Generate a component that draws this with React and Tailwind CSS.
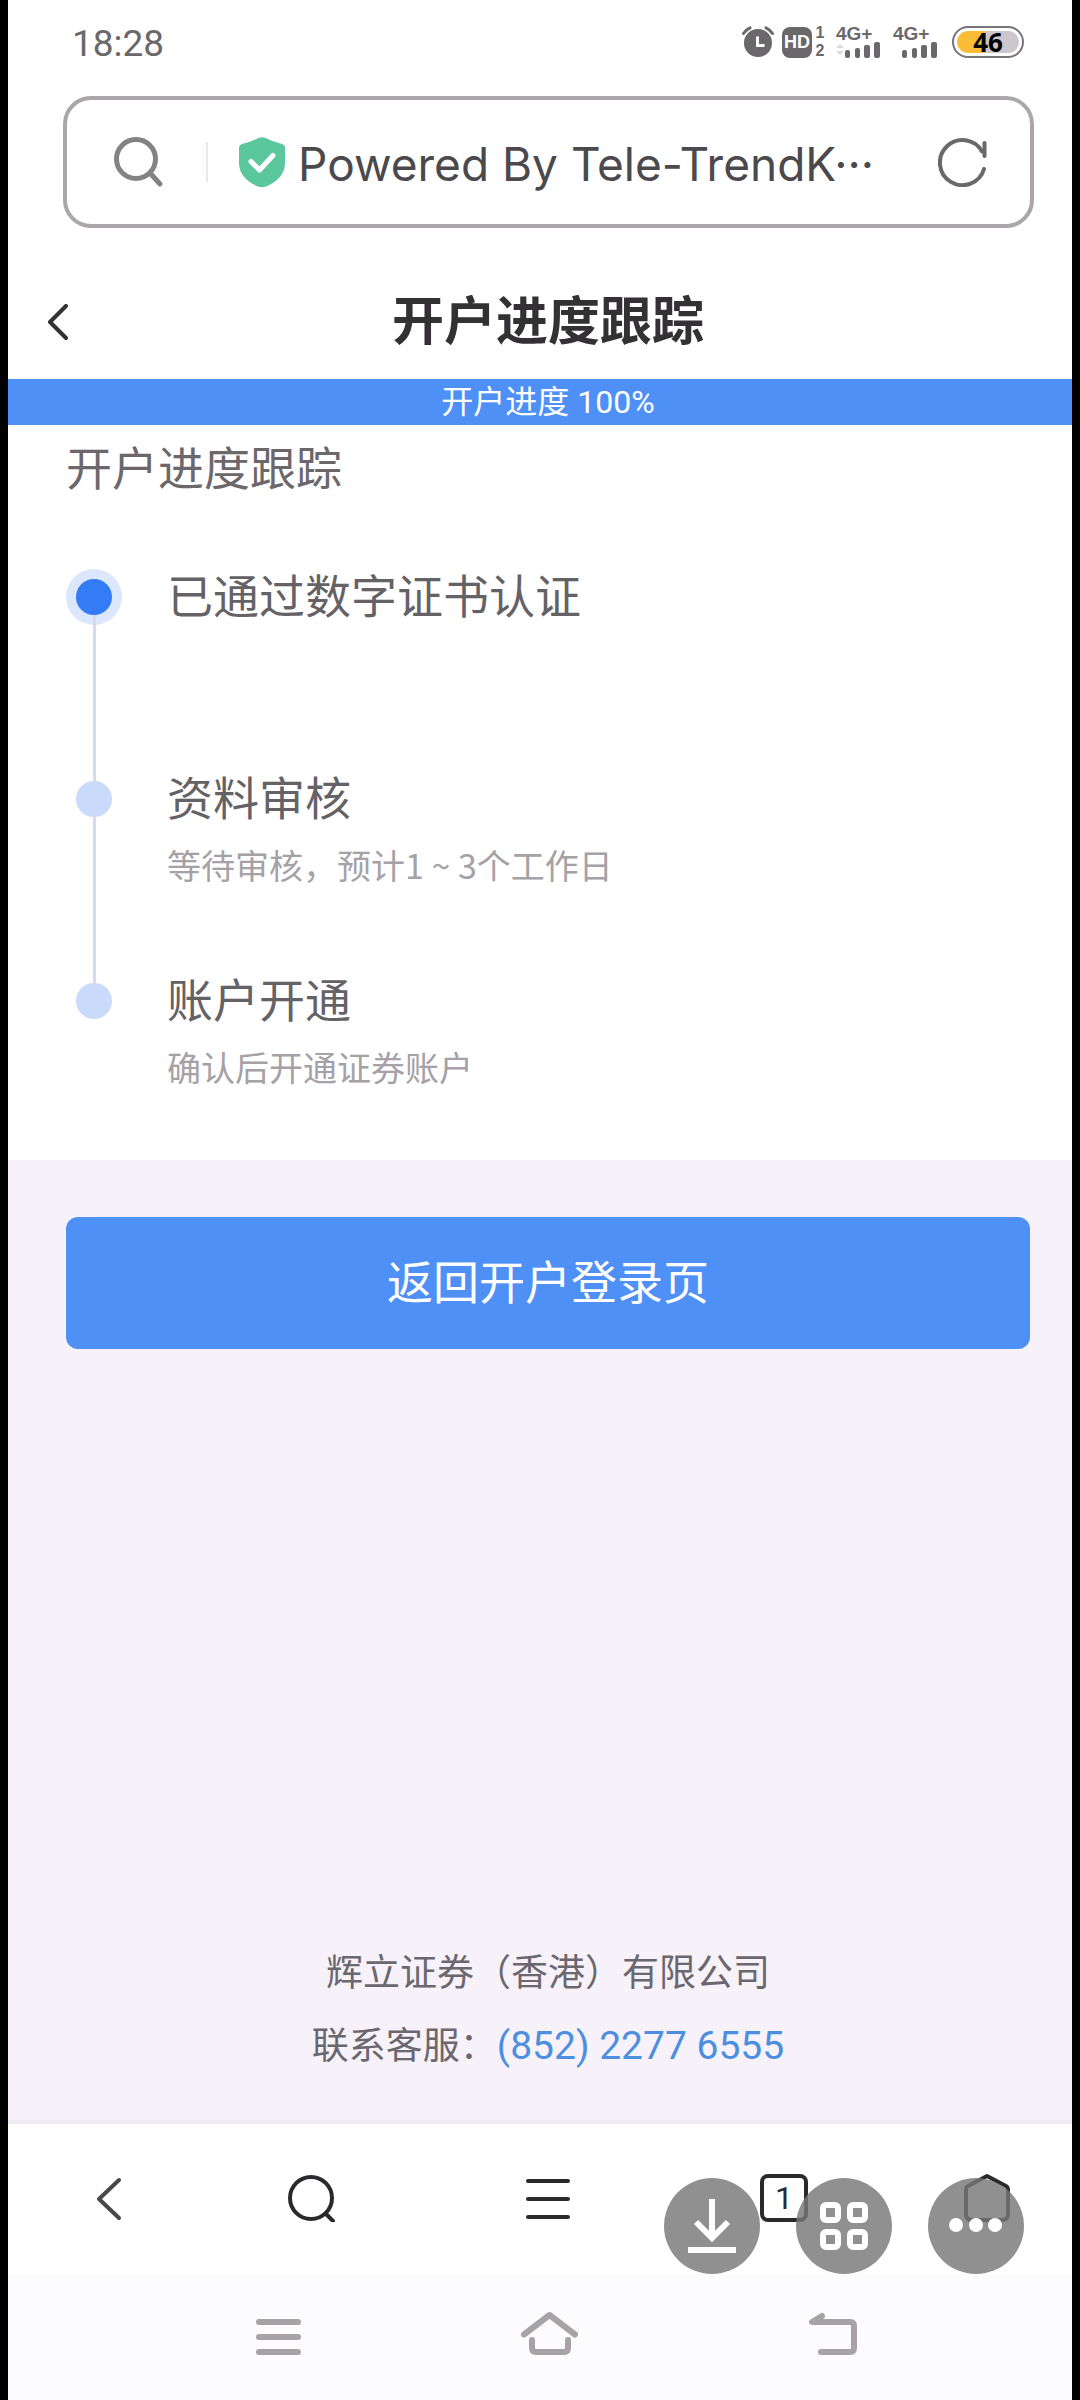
import { useState } from "react";

const steps = [
    { title: "已通过数字证书认证", note: "", active: true },
    { title: "资料审核", note: "等待审核，预计1 ~ 3个工作日", active: false },
    { title: "账户开通", note: "确认后开通证券账户", active: false },
];

function Signal({ arrows }){
    return(
        <div className="flex flex-col w-[45px]">
            <span className="text-[19px] leading-[14px] font-bold font-['Liberation_Sans',sans-serif]">4G+</span>
            <svg width="45" height="17" viewBox="0 0 45 17" fill="currentColor">
                {arrows && <path d="M0 7l4-4 4 4zM0 10l4 4 4-4z" fill="#dcd8dc" />}
                <rect x="9" y="9" width="5" height="8" rx="2" />
                <rect x="19" y="7" width="5" height="10" rx="2" />
                <rect x="28" y="4" width="6" height="13" rx="2" />
                <rect x="38" y="1" width="6" height="16" rx="2" />
            </svg>
        </div>
    );
}

function StatusBar(){
    return(
        <div className="flex items-center justify-between pt-5 pl-16 pr-12 mb-7 text-[#6b686b]">
            <time className="text-[37px] leading-12">18:28</time>
            <div className="flex items-center -mt-1">
                <svg width="32" height="32" viewBox="0 0 32 32" className="mr-2" fill="currentColor">
                    <circle cx="16" cy="17" r="14" />
                    <path d="M1.500 7.500Q4 3.500 8 1.800M30.500 7.500Q28 3.500 24 1.800" fill="none" stroke="currentColor" strokeWidth="3" strokeLinecap="round" />
                    <path d="M15.500 10.500v9h7" fill="none" stroke="#fff" strokeWidth="3" />
                </svg>
                <span className="flex items-center justify-center w-[30px] h-[31px] rounded-lg bg-[#6b686b] text-white text-[18px] font-bold font-['Liberation_Sans',sans-serif]">HD</span>
                <span className="flex flex-col items-center w-[16px] mr-2 text-[16px] leading-[18px] font-bold font-['Liberation_Sans',sans-serif]">
                    <span>1</span>
                    <span>2</span>
                </span>
                <Signal arrows />
                <span className="w-3"></span>
                <Signal />
                <div className="ml-[14px] w-[72px] h-[32px] rounded-full border-2 border-[#77747a] p-[3px]">
                    <div className="h-full rounded-full bg-linear-to-r from-[#fbbd36] from-46% to-[#cbc7cd] to-46% flex items-center justify-center text-black text-[26px] leading-none font-bold font-['Open_Sans',sans-serif]">46</div>
                </div>
            </div>
        </div>
    );
}

function AddressBar(){
    const [address, setAddress] = useState("Powered By Tele-TrendK···");
    return(
        <form className="flex items-center h-[132px] ml-[55px] mr-[38px] pl-[47px] pr-[42px] rounded-[28px] border-4 border-[#aaa6aa]">
            <svg width="50" height="50" viewBox="0 0 50 50" fill="none" stroke="#858285" strokeWidth="5" strokeLinecap="round">
                <circle cx="22" cy="22" r="19.500" />
                <path d="M36 36l10 11" />
            </svg>
            <span className="w-[2px] h-10 bg-[#ebe8ec] ml-[42px] mr-[30px]"></span>
            <svg width="48" height="52" viewBox="0 0 48 52">
                <path d="M21 1.800Q24 .5 27 1.800Q35 6 44 8Q47 9 47 12V28Q46 43 28 50.500Q24 52 20 50.500Q2 43 1 28V12Q1 9 4 8Q13 6 21 1.800z" fill="#5bc79c" />
                <path d="M13 25.500l8.500 8.500L35 19.500" fill="none" stroke="#fff" strokeWidth="5" strokeLinecap="round" strokeLinejoin="round" />
            </svg>
            <input
                aria-label="网址"
                value={address}
                onChange={(e) => setAddress(e.target.value)}
                className="flex-1 min-w-0 ml-3 pt-1 text-[46px] leading-16 text-[#4c494d] outline-none font-[Inter,sans-serif]"
            />
            <button type="button" aria-label="刷新">
                <svg width="50" height="50" viewBox="0 0 50 50" fill="none" stroke="#6b686b" strokeWidth="4" strokeLinecap="round">
                    <path d="M46 32A22.500 22.500 0 1 1 44 14.500" />
                    <path d="M46.500 6v13" />
                </svg>
            </button>
        </form>
    );
}

function Step({ step, last }){
    return(
        <li className={`relative flex gap-[45px] ${last ? "" : "min-h-[202px]"}`}>
            <div className="flex items-center justify-center w-14 h-16">
                <span className={`w-14 h-14 rounded-full ${step.active ? "bg-[#dae7fd]" : ""}`}></span>
            </div>
            {!last && <span className="absolute left-[27px] top-8 w-[3px] h-full bg-[#d4daf0]"></span>}
            <span className={`absolute left-[10px] top-[14px] z-10 w-9 h-9 rounded-full ${step.active ? "bg-[#337cf5]" : "bg-[#c9dafb]"}`}></span>
            <div>
                <h3 className="text-[46px] leading-16 text-[#656266]">{step.title}</h3>
                {step.note && <p className="mt-[2px] text-[34px] leading-16 text-[#a5a1a6] font-['Noto_Sans_CJK_SC',sans-serif]">{step.note}</p>}
            </div>
        </li>
    );
}

function BrowserBar(){
    return(
        <nav className="relative flex items-center justify-between pt-[50px] pb-[52px] pl-[74px] pr-[58px] border-t-4 border-[#f0ebf2] bg-white text-[#2b292c]">
            <button aria-label="后退" className="flex justify-center w-[54px]">
                <svg width="48" height="48" viewBox="0 0 48 48" fill="none" stroke="#4a474a" strokeWidth="4" strokeLinecap="round" strokeLinejoin="round">
                    <path d="M34 6L14 25L34 44" />
                </svg>
            </button>
            <button aria-label="搜索" className="flex justify-center w-[120px]">
                <svg width="48" height="48" viewBox="0 0 48 48" fill="none" stroke="currentColor" strokeWidth="4" strokeLinecap="round">
                    <circle cx="23" cy="24" r="21" />
                    <path d="M38 40l7 7" />
                </svg>
            </button>
            <button aria-label="菜单" className="flex justify-center w-[120px]">
                <svg width="48" height="48" viewBox="0 0 48 48" stroke="currentColor" strokeWidth="4" strokeLinecap="round">
                    <path d="M4 7h40M4 25h40M4 43h40" />
                </svg>
            </button>
            <button aria-label="标签页" className="flex justify-center w-[120px]">
                <span className="flex items-center justify-center w-12 h-12 rounded-lg border-4 border-[#2b292c] text-[32px] leading-none">1</span>
            </button>
            <button aria-label="主页" className="flex justify-center w-[54px]">
                <svg width="48" height="48" viewBox="0 0 48 48" fill="none" stroke="currentColor" strokeWidth="4" strokeLinejoin="round">
                    <path d="M24 2L43 12Q45 13 45 16V40Q45 46 39 46H9Q3 46 3 40V16Q3 13 5 12z" />
                </svg>
            </button>
            <div className="absolute bottom-0 right-12 flex gap-9">
                <button aria-label="下载" className="w-24 h-24 rounded-full bg-[#787878]/82">
                    <svg width="96" height="96" viewBox="0 0 96 96" fill="none" stroke="#fff" strokeWidth="6">
                        <path d="M48 21v38M32 44l16 16l16-16M24 72h48" />
                    </svg>
                </button>
                <button aria-label="应用" className="w-24 h-24 rounded-full bg-[#787878]/82">
                    <svg width="96" height="96" viewBox="0 0 96 96" fill="none" stroke="#fff" strokeWidth="6">
                        <rect x="27" y="27" width="15" height="15" rx="3" />
                        <rect x="54" y="27" width="15" height="15" rx="3" />
                        <rect x="27" y="54" width="15" height="15" rx="3" />
                        <rect x="54" y="54" width="15" height="15" rx="3" />
                    </svg>
                </button>
                <button aria-label="更多" className="w-24 h-24 rounded-full bg-[#787878]/82">
                    <svg width="96" height="96" viewBox="0 0 96 96" fill="#fff">
                        <circle cx="28" cy="47" r="7" />
                        <circle cx="48" cy="47" r="7" />
                        <circle cx="67" cy="47" r="7" />
                    </svg>
                </button>
            </div>
        </nav>
    );
}

function SystemBar(){
    return(
        <nav className="flex items-center justify-between pt-[38px] pb-11 pl-[248px] pr-[215px] bg-[#fcfbfe] text-[#a6a2a6]">
            <button aria-label="最近任务">
                <svg width="45" height="44" viewBox="0 0 45 44" stroke="currentColor" strokeWidth="6" strokeLinecap="round">
                    <path d="M3 10h39M3 25h39M3 40h39" />
                </svg>
            </button>
            <button aria-label="桌面" className="pr-3">
                <svg width="57" height="44" viewBox="0 0 57 44" fill="none" stroke="currentColor" strokeWidth="6" strokeLinecap="round" strokeLinejoin="round">
                    <path d="M3 22.500L28.500 3L54 22.500M11 28v8q0 4 4 4h28q4 0 4-4v-8" />
                </svg>
            </button>
            <button aria-label="返回">
                <svg width="48" height="44" viewBox="0 0 48 44" fill="none" stroke="currentColor" strokeWidth="6" strokeLinecap="round" strokeLinejoin="round">
                    <path d="M13 4L3 10H41q4 0 4 4v22q0 4-4 4H12" />
                </svg>
            </button>
        </nav>
    );
}

export default function App(){
    return(
        <div className="flex flex-col min-h-screen bg-white border-x-8 border-black font-[Roboto,'Noto_Sans_CJK_SC',sans-serif]">
            <StatusBar />
            <AddressBar />
            <header className="grid grid-cols-[64px_1fr_48px] items-center pt-[59px] pb-5">
                <button aria-label="返回上一页" className="pl-[38px]">
                    <svg width="24" height="38" viewBox="0 0 24 38" fill="none" stroke="#343135" strokeWidth="4" strokeLinecap="round" strokeLinejoin="round">
                        <path d="M20 2L4 18L20 34" />
                    </svg>
                </button>
                <h1 className="text-center text-[52px] leading-[72px] font-bold text-[#343135]">开户进度跟踪</h1>
            </header>
            <div className="pl-4 bg-[#4f90f7] text-center text-white text-[32px] leading-[46px]">开户进度 100%</div>
            <section className="pt-[10px] pb-[61px] pl-[58px] pr-[42px]">
                <h2 className="text-[46px] leading-[68px] text-[#6b676b]">开户进度跟踪</h2>
                <ol className="mt-[62px]">
                    {steps.map((step, index) => (
                        <Step key={index} step={step} last={index === steps.length - 1} />
                    ))}
                </ol>
            </section>
            <main className="flex-1 flex flex-col justify-between pt-[57px] pb-[37px] pl-[58px] pr-[42px] bg-[#f7f2fa]">
                <button className="h-[132px] rounded-xl bg-[#4f90f7] text-white text-[46px]">返回开户登录页</button>
                <footer className="text-center text-[37px] leading-[72px] text-[#6b676e]">
                    <p>辉立证券（香港）有限公司</p>
                    <p>联系客服：<a href="tel:+85222776555" className="text-[39px] text-[#4c8fe0]">(852) 2277 6555</a></p>
                </footer>
            </main>
            <BrowserBar />
            <SystemBar />
        </div>
    );
}
